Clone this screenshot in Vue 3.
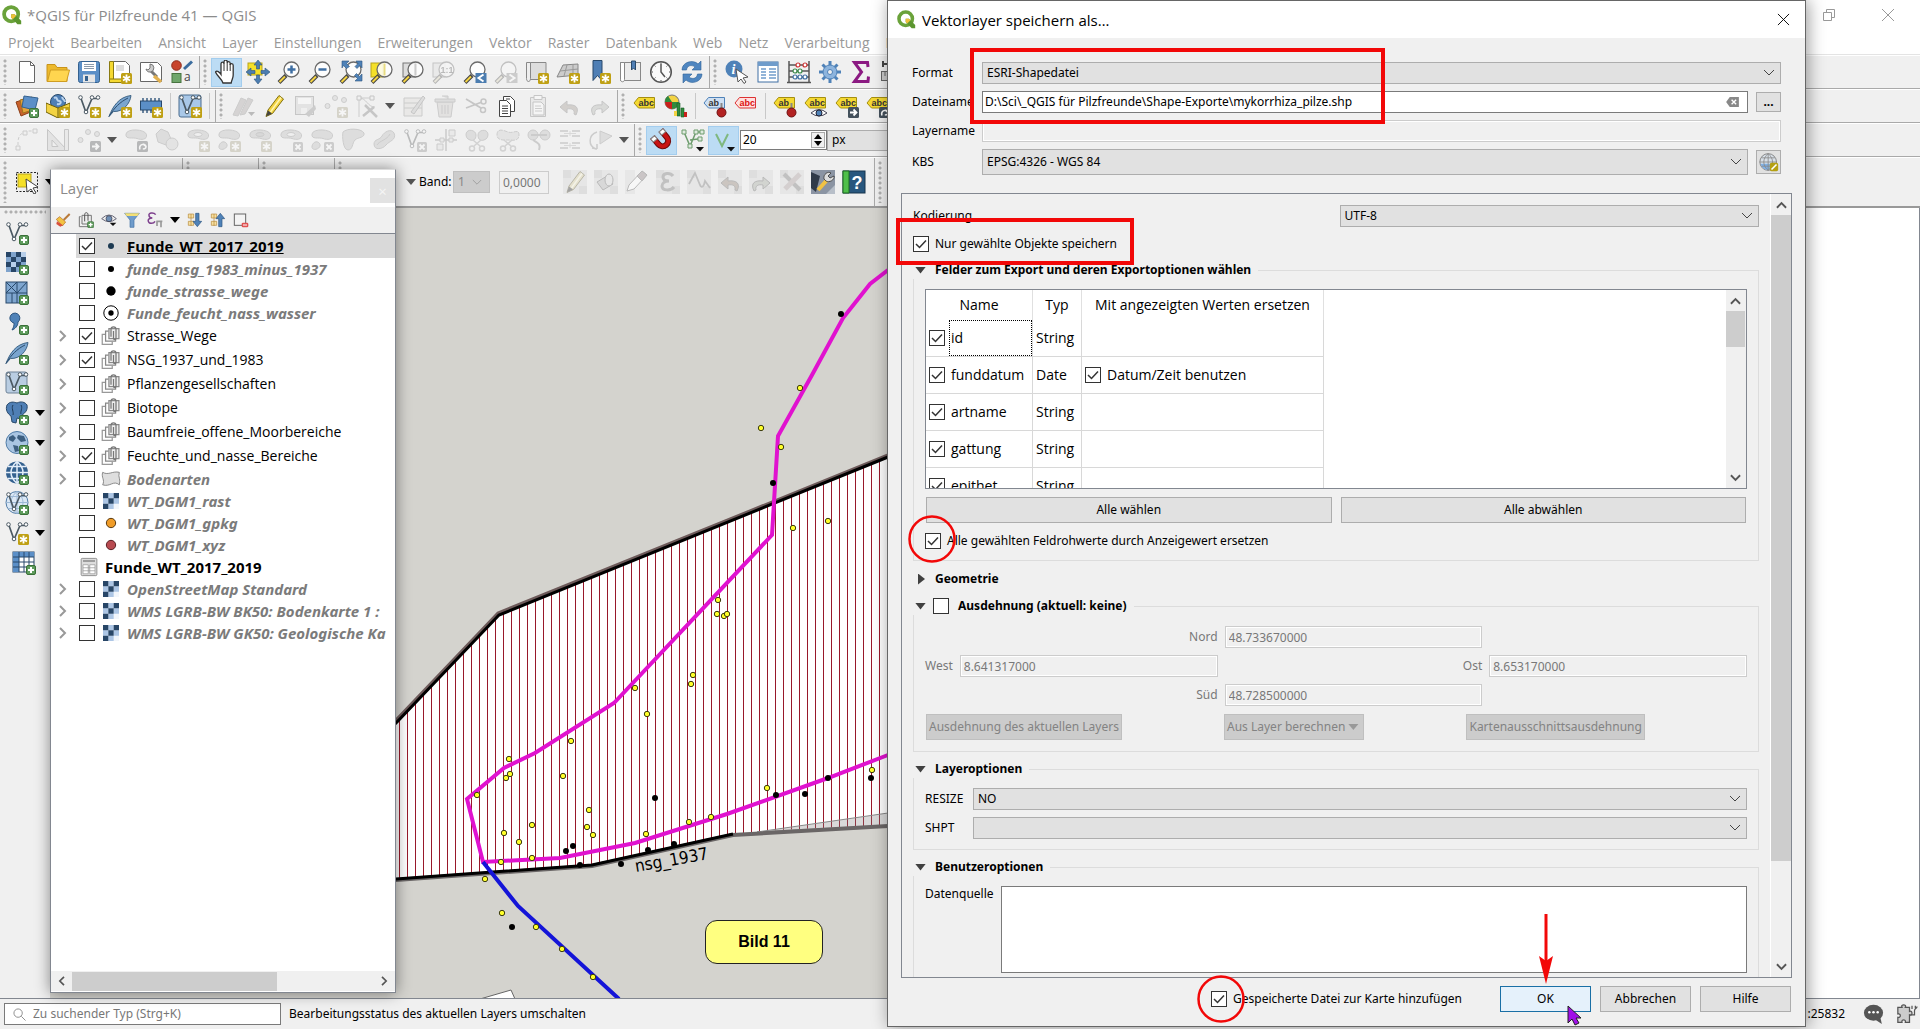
<script setup>
const menus = ['Projekt', 'Bearbeiten', 'Ansicht', 'Layer', 'Einstellungen', 'Erweiterungen', 'Vektor', 'Raster', 'Datenbank', 'Web', 'Netz', 'Verarbeitung', 'Hilfe']

// shared fragments for the 24x24 toolbar icons
const star = '<rect x="13" y="13" width="11" height="11" rx="1.500" fill="#bfa014"/><path d="M18.500 14.500v8M15 16.500l7 4M22 16.500l-7 4" stroke="#fff" stroke-width="1.800"/>'
const plus = '<rect x="14.500" y="14.500" width="9" height="9" rx="1.500" fill="#5f9c5d" stroke="#3a7038"/><path d="M19 16v6M16 19h6" stroke="#fff" stroke-width="2"/>'
const cross = '<rect x="14" y="14" width="10" height="10" rx="1.500" fill="#888"/><path d="M16.500 16.500l5 5M21.500 16.500l-5 5" stroke="#fff" stroke-width="1.800"/>'
const arrowBadge = '<rect x="13" y="13" width="11" height="11" rx="1.500" fill="#44515c"/><path d="M15 18.500h6M18.500 15.500l3 3l-3 3" stroke="#fff" stroke-width="1.800" fill="none"/>'
const rotBadge = '<rect x="13" y="13" width="11" height="11" rx="1.500" fill="#44515c"/><path d="M16 21.500c-2-5 5-7 6-3c0 2-2 3-3 2M19 16l3 2.500" stroke="#fff" stroke-width="1.600" fill="none"/>'
const lens = '<path d="M9 15.500L2 22.500" stroke="#444" stroke-width="4"/><path d="M8 16.500L2.500 22" stroke="#f3d343" stroke-width="2"/><circle cx="14.500" cy="9.500" r="7.500" fill="#fff" fill-opacity=".85" stroke="#6a6a6a" stroke-width="1.300"/>'
const vee = '<path d="M4 4.500l5 14M9 18.500L15 4.500M15 4.500h6" stroke="#4b5963" stroke-width="1.700" fill="none"/><g fill="#fff" stroke="#4b5963"><circle cx="3.500" cy="3.500" r="1.800"/><circle cx="15" cy="3.500" r="1.800"/><circle cx="21" cy="3.500" r="1.800"/><circle cx="9" cy="18" r="1.800"/></g>'
const feather = '<path d="M1 22.500C5 12 11 3 23 1.500C22 10 15 18 5.500 17.500z" fill="#7aa5cf" stroke="#3d6385"/><path d="M1 22.500C6 14 12 8 20 4" stroke="#2c4d6e" fill="none"/>'
const page = '<path d="M4.500 1.500h11l4 4v17h-15z" fill="#fff" stroke="#666"/><path d="M15.500 1.500v4h4" fill="none" stroke="#666"/>'
const blob = '<path d="M2 6C3 0 21 1 22.500 6.500C23.500 12 17 12 13 10.500C9 9 1 12 2 6z" fill="#bbb" stroke="#888"/>'
const dots = '<g fill="#ccc" stroke="#888"><circle cx="3.500" cy="12" r="2.500"/><circle cx="11" cy="4" r="2.500"/><circle cx="20" cy="6" r="2.500"/></g>'
const tag = (fill, stroke, text, col) => `<path d="M1 9L5.500 3.500H21.500V14H5.500z" fill="${fill}" stroke="${stroke}"/><text x="5.500" y="12" font-size="9" font-weight="bold" font-family="Liberation Sans, sans-serif" fill="${col}">${text}</text>`
const yTag = (t) => tag('#f5d932', '#a58f10', t, '#333')
const pin = '<path d="M18.500 9v7" stroke="#888" stroke-width="2"/><circle cx="18.500" cy="18.500" r="4.500" fill="#b22222" stroke="#701010"/>'
const scissors = '<path d="M8 12l7 6M16 12l-7 6" stroke="#999" stroke-width="1.500"/><g fill="none" stroke="#999" stroke-width="1.500"><circle cx="7" cy="20.500" r="2.500"/><circle cx="17" cy="20.500" r="2.500"/></g>'
const undo = '<path d="M19 21c4-8-1-11-9-10V7L3 13L10 19V15C15 14 18 16 17 20z" fill="#b98c68" stroke="#777"/>'
const redo = '<path d="M5 21c-4-8 1-11 9-10V7L21 13L14 19V15C9 14 6 16 7 20z" fill="#a5b59a" stroke="#777"/>'
const pencil = '<path d="M4 22.500L6 16L17 1.500L21.500 5L10.500 19.500z" fill="#f3d343" stroke="#82700c"/><path d="M8.500 18L19 3.500" stroke="#fff6b0" stroke-width="1.500"/><path d="M4 22.500l2-6 4 3z" fill="#444"/>'
const globe = '<circle cx="12" cy="11.500" r="11" fill="#a9c5e2" stroke="#4f7ba6"/>'
const grid = '<path d="M1 11.500h22M12 .5v22M3 5.500h18M3 17.500h18M12 .5c-8 7-8 15 0 22M12 .5c8 7 8 15 0 22" fill="none"'
const checker = '<rect x="1" y="1" width="20" height="20" fill="#7fa3cc"/><path d="M1 1h5v5H1zM11 1h5v5h-5zM6 6h5v5H6zM1 11h5v5H1zM11 11h5v5h-5zM6 16h5v5H6zM16 6h5v5h-5z" fill="#284667"/><path d="M6 11h5v5H6zM16 1h5v5h-5z" fill="#b8cfea"/>'
const halo = (s) => '<rect width="24" height="24" fill="#d9d9d9"/><path d="M0 0h8v8H0zM16 16h8v8h-8z" fill="#c8c8c8"/>' + s

const icons = {
  neu: page,
  open: '<path d="M1 4.500h8l2 3h10v14H1z" fill="#edb92c" stroke="#c8931a"/><path d="M4.500 10h19l-3 11.500H1.500z" fill="#ffd54f" stroke="#cf9d22"/>',
  save: '<rect x="1.500" y="1.500" width="21" height="21" rx="2" fill="#5b8fc7" stroke="#34618f"/><rect x="5" y="2" width="14" height="9" fill="#fff"/><path d="M7 4.500h10M7 6.500h10M7 8.500h10" stroke="#8a9aab"/><rect x="6" y="14.500" width="12" height="8" fill="#e6e6e6"/><rect x="8" y="16" width="3" height="5" fill="#34618f"/>',
  layout: '<path d="M5.500 1.500h12l4 4v15h-16z" fill="#fff" stroke="#666"/><path d="M1.500 1.500h4v21h-4z" fill="#f5d932" stroke="#8a7a10"/><path d="M8 5h8v6H8z" fill="#ddd"/><path d="M1.500 19h12v3.500h-12z" fill="#f5d932" stroke="#8a7a10"/>' + star,
  manage: '<path d="M1.500 2.500h17l4 4v15h-21z" fill="#fff" stroke="#666"/><path d="M10 9l8 8" stroke="#777" stroke-width="3"/><path d="M7 9a4 4 0 1 0 4-5v4l-2 2z" fill="#ccc" stroke="#777"/><path d="M15 16l7 6" stroke="#e0b050" stroke-width="3.500"/>',
  style: '<circle cx="6.500" cy="5.500" r="4.800" fill="#c8442c" stroke="#8d2b1b"/><path d="M14 9L22 1.500" stroke="#3a6c9e" stroke-width="3"/><rect x="2" y="13.500" width="9" height="9" fill="#6fa66b" stroke="#47733f"/><text x="14" y="21" font-size="12" font-family="Open Sans, sans-serif" fill="#444">a</text>',
  hand: '<path d="M8 23c-1-4-6-7-7.500-11c1.500-2 4 0 5.500 2.500V4c0-2.500 3-2.500 3 0V2c0-2.500 3.200-2.500 3.200 0v1c0-2 3-2 3 .5v1.500c0-2 3-2 3 .5V15c0 3-1.500 5-2 8z" fill="#fff" stroke="#333" stroke-width="1.300"/><path d="M9 4v7M12.200 3v8M15.200 4v7" stroke="#333"/>',
  pan: '<rect x="2" y="3" width="14" height="12" fill="#f5e028" stroke="#b8a41c"/><g fill="#4c7db0" stroke="#2c5580" stroke-width=".6"><path d="M12 0l4 5h-2.500v4h-3V5H8z"/><path d="M12 24l4-5h-2.500v-4h-3v4H8z"/><path d="M0 12l5-4v2.500h4v3H5V16z"/><path d="M24 12l-5-4v2.500h-4v3h4V16z"/></g>',
  zin: lens + '<path d="M14.500 5.500v8M10.500 9.500h8" stroke="#3f6fa3" stroke-width="2.500"/>',
  zout: lens + '<path d="M10.500 9.500h8" stroke="#3f6fa3" stroke-width="2.500"/>',
  zfull: lens + '<g fill="#4f82b8" stroke="#2c5580" stroke-width=".6"><path d="M3 1h7L7.500 3.500l3 3-3 2-3-3L3 8zM23 1h-6l2 2.500-3 3 2 2 3-3L23 8zM23 21h-7l2.500-2.500-3-3 2-2 3 3L23 14z"/></g>',
  zsel: '<rect x="1" y="3" width="12" height="14" fill="#f5e028" stroke="#b8a41c"/>' + lens + '<path d="M14.500 3.500v12" stroke="#e8dc80" stroke-width="2"/>',
  zlay: '<rect x="2" y="3" width="12" height="14" fill="#ddd" stroke="#777"/>' + lens + '<path d="M14.500 3.500v12" stroke="#ccc" stroke-width="2"/>',
  z11: '<rect x="1" y="3" width="12" height="14" fill="#ddd" stroke="#777"/>' + lens + '<text x="8.500" y="13" font-size="9" font-weight="bold" font-family="Liberation Sans, sans-serif" fill="#555">1:1</text>',
  zlast: lens + '<rect x="12.500" y="13" width="11" height="10" fill="#4c7db0"/><path d="M20.500 14.500l-5 3.500l5 3.500" stroke="#fff" stroke-width="2" fill="none"/>',
  znext: lens + '<rect x="12.500" y="13" width="11" height="10" fill="#888"/><path d="M15.500 14.500l5 3.500l-5 3.500" stroke="#fff" stroke-width="2" fill="none"/>',
  nmap: '<path d="M3 2.500h18v17H5" fill="#ddd" stroke="#888"/><path d="M1.500 2.500h4v16c0 4-4 4-4 0z" fill="#eee" stroke="#888"/>' + star,
  map3d: '<path d="M7 5l15-1v11L1 17z" fill="#ccc" stroke="#888"/><path d="M11 5l-3 11M17 4.500V15M4 11l18-2" stroke="#999" fill="none"/>' + star,
  bmark: '<path d="M6 .5h9v20l-4.500-5-4.500 5z" fill="#4f7fb5" stroke="#28496b"/>' + star,
  bmarks: '<rect x="2.500" y="2.500" width="20" height="18" fill="#ececec" stroke="#888"/><path d="M2.500 2.500h4v17c0 3-4 3-4 0z" fill="#fff" stroke="#888"/><path d="M13.500 1h4v9l-2-2-2 2z" fill="#4f7fb5" stroke="#28496b"/>',
  clock: '<circle cx="12" cy="12" r="10.300" fill="#fafafa" stroke="#555" stroke-width="1.500"/><path d="M12 4v8l4 5" stroke="#555" stroke-width="1.500" fill="none"/><path d="M12 2.500v1.500M12 20v1.500M2.500 12H4M20 12h1.500M5.500 5.500l1 1M18.500 5.500l-1 1M5.500 18.500l1-1M18.500 18.500l-1-1" stroke="#555"/>',
  refresh: '<g fill="#4f86c0" stroke="#2f6399" stroke-width=".6"><path d="M2 10C2 2 13-1 18 4l3-3v9h-9l3-3C11 4 7 6 6.500 10z"/><path d="M22 14c0 8-11 11-16 6l-3 3v-9h9l-3 3c4 3 8 1 8.500-3z"/></g>',
  ident: '<circle cx="9" cy="9" r="8.500" fill="#4f82b8"/><text x="6.500" y="14" font-size="14" font-style="italic" font-weight="bold" font-family="Liberation Serif, serif" fill="#fff">i</text><path d="M11 9l12 8-5 1 3 4-2 1.500-3-4.500-3 3z" fill="#fff" stroke="#555"/>',
  table: '<rect x="2" y="2" width="20" height="20" fill="#fff" stroke="#3f6fa3"/><rect x="2" y="2" width="20" height="4" fill="#6f9ccb"/><path d="M5 9h5M5 12h5M5 15h5M5 18h5M13 9h7M13 12h7M13 15h7M13 18h7" stroke="#6f9ccb" stroke-width="1.500"/>',
  abacus: '<path d="M2 1v22M22 1v22M2 5h20M2 11h20M2 17h20M0 22.500h24" stroke="#555" stroke-width="1.500" fill="none"/><g fill="#fff" stroke-width="1.200"><g stroke="#c33"><circle cx="11" cy="5" r="2"/><circle cx="18" cy="5" r="2"/></g><g stroke="#3a8a4a"><circle cx="8" cy="11" r="2"/><circle cx="13" cy="11" r="2"/></g><g stroke="#3f6fa3"><circle cx="8" cy="17" r="2"/><circle cx="13" cy="17" r="2"/><circle cx="18" cy="17" r="2"/></g></g>',
  gear: '<g stroke="#4f82b8" stroke-width="3"><path d="M12 1v22M1 12h22M4.500 4.500l15 15M19.500 4.500l-15 15"/></g><circle cx="12" cy="12" r="7" fill="#8db4dd" stroke="#4f82b8"/><circle cx="12" cy="12" r="2.500" fill="#f0f0f0" stroke="#4f82b8"/>',
  sigma: '<path d="M19 7l-.5-4.500H5.500L12.500 12L5.500 21.500h13.500l.5-5" fill="none" stroke="#8b1a82" stroke-width="3"/>',
  ruler: '<path d="M3 1v6M3 4h21" stroke="#444" stroke-width="2"/><rect x="1.500" y="11.500" width="22" height="9" fill="#ccc" stroke="#666"/><path d="M5 12v4M9 12v6M13 12v4M17 12v6" stroke="#666"/>',
  src: '<path d="M1 8l12-4 5 13-12 5z" fill="#c8622c" stroke="#8d3f18"/><path d="M5 6l12-3 4 12-13 4z" fill="#e3a33a" stroke="#a0701c"/><path d="M9 2l14 2-3 12-13-3z" fill="#5b8fc7" stroke="#34618f"/>' + plus,
  gpkg: '<circle cx="12" cy="8" r="7.500" fill="#4f7fb5" stroke="#28496b"/><path d="M8 4c4-2 2 3 5 3s2 4-2 3M16 3c1 3 3 3 3 5" stroke="#b9d3ee" stroke-width="2" fill="none"/><path d="M0 9l12 5 12-5v9l-12 6L0 18z" fill="#f3d343" stroke="#6d5d08"/><path d="M12 14v9.500" stroke="#6d5d08"/>' + star,
  vstar: vee + star, vplus: vee + plus,
  fstar: feather + star, fplus: feather + plus,
  chip: '<path d="M4 4v15M8 4v15M12 4v15M16 4v15M20 4v15" stroke="#3c5f83" stroke-width="1.500"/><rect x="1.500" y="7" width="21" height="9" fill="#5b8fc7" stroke="#28496b"/>' + star,
  virt: '<rect x="1" y="1" width="22" height="22" rx="2" fill="#a9c8e8" stroke="#4b6d8f"/>' + vee + star,
  virtp: '<rect x="1" y="1" width="21" height="21" rx="2" fill="#b9cde2" stroke="#6f8398"/>' + vee + plus,
  pens: '<path d="M2 21l8-17 5 2-8 16zM9 21l8-17 5 2-8 14z" fill="#b49a90" stroke="#888"/><path d="M17 18h7l-3.500 4z" fill="#555"/>',
  pencil,
  saveed: '<rect x="2.500" y="2.500" width="18" height="18" fill="#ccc" stroke="#777"/><rect x="5" y="4" width="13" height="6" fill="#fff"/><path d="M8 14h6v6H8z" fill="#eee"/><path d="M12 20l10-9 1 4-7 8z" fill="#888"/>',
  ptadd: dots + star,
  node: '<path d="M4 23V4h14M4 4c8 0 8 9 16 9" stroke="#888" fill="none"/><g fill="#eee" stroke="#777"><path d="M2 2h4v4H2zM15 2h4v4h-4z"/></g><path d="M8 22l11-9M10 11l12 12" stroke="#777" stroke-width="2.500"/>',
  form: '<path d="M2 4h18v18H2zM2 9h18M2 14h18" fill="#e8d6cc" stroke="#888"/><path d="M9 18L21 2l2 2L12 20z" fill="#bbb" stroke="#777"/>',
  trash: '<path d="M4 8h16l-2 15H6z" fill="#d8c0bb" stroke="#888"/><path d="M2 5h20v3H2zM9 2h6v3" fill="#bbb" stroke="#888"/><path d="M9 11v9M12 11v9M15 11v9" stroke="#888"/>',
  cut: '<path d="M2 5l15 9M2 14L18 8" stroke="#777" stroke-width="1.800"/><circle cx="19.500" cy="7.500" r="2.500" fill="none" stroke="#777" stroke-width="1.500"/><circle cx="19" cy="16" r="2.500" fill="none" stroke="#777" stroke-width="1.500"/>',
  copy: '<path d="M8.500 2.500h7l4 4v11h-11z" fill="#fff" stroke="#444"/><path d="M4.500 6.500h7l4 4v12h-11z" fill="#fff" stroke="#444"/><path d="M7 12h6M7 14.500h6M7 17h6M7 19.500h6M11 5h4" stroke="#444"/>',
  paste: '<path d="M4.500 3.500h15v19h-15z" fill="#ddd" stroke="#777"/><path d="M8 1.500h8v4H8zM7 8h8l3 3v10H7z" fill="#fff" stroke="#777"/><path d="M9 12h6M9 14.500h7M9 17h7" stroke="#888"/>',
  undo, redo,
  lab: yTag('abc'),
  diag: '<circle cx="8" cy="8" r="7" fill="#f3d343" stroke="#777"/><path d="M8 8L1 8a7 7 0 0 1 3-6z" fill="#2e8b3d"/><path d="M8 8h7a7 7 0 0 1-7 7z" fill="#2e8b3d"/><path d="M8 8v7a7 7 0 0 1-7-7z" fill="#c8201c"/><path d="M13 9h3v13h-3zM17 14h3v9h-3z" fill="#2e8b3d" stroke="#1a5a25" stroke-width=".6"/><path d="M20 18h3v5h-3z" fill="#c8201c"/><path d="M10 17h3v5h-3z" fill="#f3d343"/>',
  labBlue: tag('#cfe0f3', '#4f82b8', 'ab', '#333') + pin,
  labRed: tag('#ffe0e0', '#d33', 'abc', '#d11'),
  labPin: yTag('ab') + pin,
  labEye: yTag('abc') + '<path d="M7 19q8-7 16 0q-8 6-16 0z" fill="#fff" stroke="#445"/><circle cx="15" cy="19" r="3" fill="#4f82b8" stroke="#223"/>',
  labMove: yTag('abc') + arrowBadge,
  labRot: yTag('abc') + rotBadge,
  arc: '<path d="M3 22V14C3 7 8 3 14 3h8" fill="none" stroke="#888" stroke-dasharray="3 2"/><g fill="#eee" stroke="#888"><path d="M1 18h4v4H1zM8 3h4v4H8zM18 1h4v4h-4z"/></g>',
  setsq: '<path d="M1.500 1.500v21h20z" fill="#ccc" stroke="#777"/><path d="M6 12v6.500h6z" fill="#eee" stroke="#777"/><path d="M18.500 1.500h4v21h-4z" fill="#ddd" stroke="#777"/>',
  ptmove: dots + arrowBadge,
  b1: blob + rotBadge, b2: '<path d="M1 6l5-5 7 3 3 7-5 6-8-3z" fill="#bbb" stroke="#888"/><circle cx="17" cy="16" r="6" fill="#ccc" stroke="#888"/>',
  b3: blob + '<ellipse cx="12" cy="6.500" rx="4" ry="2" fill="#eee" stroke="#888"/>' + star,
  b4: blob + '<path d="M2 18c2-7 9-4 8 0s-9 5-8 0z" fill="#bbb" stroke="#888"/>' + star,
  b5: blob + '<ellipse cx="12" cy="6.500" rx="4" ry="2" fill="#aaa" stroke="#888"/>' + star,
  b6: blob + '<ellipse cx="12" cy="6.500" rx="4" ry="2" fill="#eee" stroke="#888"/>' + cross,
  b7: blob + '<path d="M2 18c2-7 9-4 8 0s-9 5-8 0z" fill="#bbb" stroke="#888"/>' + cross,
  b8: '<path d="M2 4c4-4 18-4 21 1c1 5-6 4-9 7s-2 10-7 10C2 22 1 8 2 4z" fill="#bbb" stroke="#888"/>',
  b9: '<path d="M2 16c0-5 6-4 8-8s9-8 12-3c3 7-5 8-8 12s-12 6-12-1z" fill="#bbb" stroke="#888"/><path d="M5 17c2-4 10-5 13-11" fill="none" stroke="#888"/>',
  b10: vee + cross,
  b11: '<path d="M12 1v22M1 12h22" stroke="#888" stroke-width="1.500"/><g fill="#ddd" stroke="#888"><path d="M15 2h6v6h-6zM3 16h6v6H3zM15 10h4v4h-4zM6 10h4v4H6z"/></g>',
  b12: '<path d="M1 6c1-6 10-4 10 1s-3 6-6 5S1 9 1 6zM23 6c-1-6-10-4-10 1s3 6 6 5 4-3 4-6z" fill="#bbb" stroke="#888"/>' + scissors,
  b13: '<path d="M1 7c0-7 6-5 11-3s11-4 11 3-8 5-11 5S1 13 1 7z" fill="#ccc" stroke="#888" stroke-dasharray="4 1"/>' + scissors,
  b14: '<circle cx="6" cy="7" r="5" fill="#bbb" stroke="#888"/><circle cx="18" cy="7" r="5" fill="#bbb" stroke="#888"/><path d="M6 12c5 3 8 4 6 10M4 7h16" fill="none" stroke="#888" stroke-width="2"/>',
  b15: '<path d="M2 3h8M14 3h8M2 8h8M14 8h8M2 15h8M14 15h8M2 20h8M14 20h8" stroke="#888" stroke-width="1.500"/><path d="M6 5.500h12M6 17.500h12M12 3v5M12 15v5" stroke="#aaa"/>',
  b16: '<path d="M11 3v13l12-8z" fill="#bbb" stroke="#888"/><path d="M8 4c-9 3-9 14-1 17M8 21l-5-1M8 21v-5" fill="none" stroke="#888" stroke-width="1.500"/>',
  magnet: '<g transform="rotate(-40 12 12)"><path d="M4 4v9a8 8 0 0 0 16 0V4h-5v9a3 3 0 0 1-6 0V4z" fill="#c81414" stroke="#6d0808"/><path d="M4 4h5v4H4zM15 4h5v4h-5z" fill="#fff" stroke="#888"/></g>',
  snapv: '<path d="M3 4l6 14L15 4M15 4h6M9 12l8-1" stroke="#6d9c6d" stroke-width="1.500" fill="none"/><g fill="#dfeadf" stroke="#6d9c6d"><path d="M1 2h4v4H1zM13 2h4v4h-4zM19 2h4v4h-4zM7 16h4v4H7zM17 9h4v4h-4z"/></g><path d="M15 19h8l-4 4.500z" fill="#111"/>',
  snaps: '<path d="M4 6l6 12 6-12" stroke="#7fb87f" stroke-width="2" fill="none"/><path d="M15 19h8l-4 4.500z" fill="#111"/>',
  select: '<rect x="1.500" y="2.500" width="21" height="19" fill="none" stroke="#222" stroke-dasharray="2 1.500"/><rect x="3" y="4" width="13" height="13" fill="#f5e028" stroke="#b8a41c"/><path d="M11 9l12 8-5 1 3 5-2 1-3-5-4 3z" fill="#fff" stroke="#444"/>',
  e1: halo(pencil), e2: halo('<path d="M3 12l10-6 6 8-10 6z" fill="#bbb" stroke="#777"/><ellipse cx="15" cy="10" rx="4" ry="6" fill="#ddd" stroke="#777"/>'),
  e3: '<path d="M0 0h10v24H0z" fill="#ddd"/><path d="M2 21l2-6L17 1l5 4L9 19z" fill="#fff" stroke="#777"/><path d="M12 6l5-5 5 4-5 6z" fill="#b08a90" stroke="#777"/>',
  e4: halo('<path d="M17 6c-3-4-10-3-10 1 0 3 3 4 6 4-4 0-7 2-7 5 0 5 9 5 12 1" fill="none" stroke="#888" stroke-width="3"/>'),
  e5: halo('<path d="M2 14L8 3l5 12c2 4 4 1 5-4l5 7" fill="none" stroke="#888" stroke-width="1.800"/>'),
  e6: halo(undo), e7: halo(redo),
  e8: halo('<path d="M4 4l16 16" stroke="#888" stroke-width="4"/><path d="M20 4L5 19" stroke="#c9a0a0" stroke-width="5"/>'),
  e9: '<rect width="24" height="24" fill="#8b94a3"/><path d="M0 2l9 4-4 16-5-4z" fill="#303a48"/><path d="M24 24V15l-9 9z" fill="#b8bfc9"/><path d="M7 20l9-10" stroke="#f0c244" stroke-width="4"/><path d="M13 9c-1-5 4-8 7-6l-3 3 2 2 4-2c1 4-5 7-8 5z" fill="#ddd" stroke="#333" stroke-width=".8"/>',
  e10: '<rect x="1" y="1" width="22" height="22" fill="#28577e" stroke="#16344d"/><path d="M1 1h6v22H1z" fill="#4fbf4a" stroke="#1f6d20"/><text x="9.500" y="19" font-size="18" font-weight="bold" font-family="Liberation Sans, sans-serif" fill="#fff">?</text>',
  // data source bar
  rast: checker + plus,
  mesh: '<rect x="1" y="1" width="21" height="21" fill="#7fa6cf" stroke="#28496b"/><path d="M1 12h21M12 1v21M1 1l11 11M12 12L22 1M1 12L12 1M7 12v10" stroke="#28496b" fill="none"/>' + plus,
  comma: '<path d="M5 6a5 5 0 1 1 8 5c0 4-3 7-6 8 2-3 2-5 2-7a5 5 0 0 1-4-6z" fill="#4f82b8" stroke="#2c5580"/>' + plus,
  pg: '<path d="M2 4c3-4 7-3 10-2 4-2 8-1 10 2 1 5-2 8-4 9l-2 5-4-1-1 5-4-1-1-6C3 13 0 9 2 4z" fill="#4f7fb5" stroke="#28496b"/><path d="M8 4c-2 3 1 7 0 10M16 4c2 3-1 7 0 9" fill="none" stroke="#1f3c5b"/>' + plus,
  wms1: globe + '<path d="M4 6l4-2 3 3-3 4-4-2zM13 4l6 1 2 5-5 1-4-4zM8 14l5 1 1 5-4 1z" fill="#3d5f80"/>' + plus,
  wms2: '<circle cx="12" cy="11.500" r="11" fill="#34618f"/>' + grid + ' stroke="#e3eefa" stroke-width="1.500"/>' + plus,
  wfs: '<circle cx="12" cy="11.500" r="11" fill="#dbe8f5" stroke="#4f7ba6"/>' + grid + ' stroke="#9db9d6"/>' + vee + plus,
  dbt: '<rect x="1" y="1" width="21" height="20" fill="#fff" stroke="#28496b"/><path d="M1 1h21v5H1zM1 1h6v20H1z" fill="#5b8fc7"/><path d="M1 6h21M1 11h21M1 16h21M7 1v20M12 1v20M17 1v20" stroke="#28496b"/>' + plus,
  // layer tree
  brush: '<path d="M22 3l-9 9" stroke="#b97a3a" stroke-width="3"/><path d="M2 11l5-4 9 8-5 6z" fill="#f3c343" stroke="#b06a20"/><path d="M3 14l9 6-4 2-6-4z" fill="#d8503c"/>',
  grpadd: '<path d="M4 7H2v15h13v-4" fill="none" stroke="#777" stroke-width="1.500"/><path d="M6 5h14v13H6z" fill="#eee" stroke="#777" stroke-width="1.500"/><path d="M10 14V4c0-4 5-4 5 0v9" fill="none" stroke="#555" stroke-width="1.500"/>' + plus,
  eye: '<path d="M1 10q11-11 22 0q-11 9-22 0z" fill="#eee" stroke="#667" stroke-width="1.500"/><circle cx="12" cy="10" r="4.500" fill="#6f8fb5" stroke="#334"/><path d="M13 16h10l-5 5z" fill="#111"/>',
  filt: '<path d="M1 2h22l-8 10v11H9V12z" fill="#6f9ccb" stroke="#3f6fa3"/><path d="M1 2h22l-3 4H4z" fill="#f3e077"/>',
  eps: '<path d="M13 4C10 0 2 1 3 5c0 3 3 4 5 4-4 0-7 2-6 5 1 4 8 4 10 0" fill="none" stroke="#7d3f8d" stroke-width="2.200"/><path d="M14 14h9M15 14v7M21 14v9" stroke="#999" stroke-width="2.500"/>',
  exp: '<path d="M2 3h8v6H2zM2 14h8v6H2zM6 3v18" fill="#f6dfa0" stroke="#b58a3a"/><path d="M13 2h5v12h4l-6.500 8L9 14h4z" fill="#4f82b8" stroke="#2c5580"/>',
  col: '<path d="M2 3h8v6H2zM2 14h8v6H2zM6 3v18" fill="#f6dfa0" stroke="#b58a3a"/><path d="M13 22h5V10h4l-6.500-8L9 10h4z" fill="#4f82b8" stroke="#2c5580"/>',
  rem: '<rect x="2" y="3" width="17" height="17" fill="#f4f4f4" stroke="#666" stroke-width="1.500"/><rect x="13" y="16" width="10" height="7" rx="2" fill="#e05252"/><path d="M15 19.500h6" stroke="#fff" stroke-width="1.500"/>',
  group: '<path d="M5 10H1.500v12h12v-3" fill="none" stroke="#999" stroke-width="1.500"/><path d="M9 6H5.500v12h12v-3" fill="none" stroke="#888" stroke-width="1.500"/><path d="M9.500 3h12v12h-12z" fill="#eee" stroke="#888" stroke-width="1.500"/><path d="M12 13V4c0-4 6-4 6 0v10c0 3-3 3-3 0V6" fill="none" stroke="#777" stroke-width="1.500"/>',
  poly: '<path d="M2 4c7 4 12-2 20 0c-2 6 2 8 0 15c-7-6-11 3-20 0c3-6-2-9 0-15z" fill="#dedede" stroke="#777"/>',
  rasterS: '<rect width="24" height="24" fill="#f2f6fb"/><path d="M8 0h8v8H8zM0 8h8v8H0zM16 8h8v8h-8zM8 16h8v8H8z" fill="#adc6e5"/><path d="M0 0h8v8H0zM16 0h8v8h-8zM8 8h8v8H8zM0 16h8v8H0z" fill="#284667"/>',
  tableS: '<rect x="1.500" y=".5" width="21" height="23" rx="1.500" fill="#ddd" stroke="#777"/><path d="M4 4h16" stroke="#888" stroke-width="2"/><path d="M4 9h7v12H4zM13 9h7v12h-7zM4 13h16M4 17h16" stroke="#999" fill="#fff"/>',
  dotNavy: '<circle cx="12" cy="12" r="4.500" fill="#1d3a52"/>',
  dotS: '<circle cx="12" cy="12" r="4.500" fill="#000"/>',
  dotM: '<circle cx="12" cy="12" r="7" fill="#000"/>',
  dotRing: '<circle cx="12" cy="12" r="10.800" fill="#fff" stroke="#000" stroke-width="1.500"/><circle cx="12" cy="12" r="4"/>',
  dotOrange: '<circle cx="12" cy="12" r="7" fill="#f09c28" stroke="#5a3a10" stroke-width="1.500"/>',
  dotRed: '<circle cx="12" cy="12" r="7" fill="#b84a50" stroke="#5a2024" stroke-width="1.500"/>',
  logo: '<circle cx="11" cy="11" r="8.500" fill="none" stroke="#6aa23a" stroke-width="4.500"/><path d="M11 11h4l8 8v4h-4.500L11 15z" fill="#5c962f"/><path d="M11 11h4l2 2-4 4-2-2z" fill="#efc13a"/>',
}

// a trailing '-' marks a disabled action, '+' a pressed one
const act = (s) => s.split(' ').map((t) => {
  const m = t.match(/^(.*?)([-+]?)$/)
  return { name: m[1], off: m[2] === '-', on: m[2] === '+' }
})
const bars1 = [
  act('neu open save layout manage style'),
  act('hand+ pan zin zout zfull zsel zlay z11- zlast znext- nmap map3d bmark bmarks clock refresh'),
  act('ident table abacus gear sigma ruler'),
]
const bars2 = [
  act('src gpkg vstar fstar chip | virt |'),
  act('pens- pencil saveed- ptadd- node- v form- trash- cut- copy paste- undo- redo-'),
  act('lab diag | labBlue labRed | labPin labEye labMove labRot'),
]
const bar3 = act('arc- setsq- ptmove- v b1- b2- b3- b4- b5- b6- b7- b8- b9- b10- b11- b12- b13- b14- b15- b16- v')
const bar4 = act('e1- e2- e3- e4- e5- e6- e7- e8- e9 e10')
const side = [['vplus'], ['rast'], ['mesh'], ['comma'], ['fplus'], ['virtp'], ['pg', 1], ['wms1', 1], ['wms2'], ['wfs', 1], ['vstar', 1], ['dbt']]
const treeTools = ['brush', 'grpadd', 'eye', 'filt', 'eps', 'v', 'exp', 'col', 'rem']

const layers = [
  { t: 'Funde_WT_2017_2019', i: 'dotNavy', c: true, k: 'current tall' },
  { t: 'funde_nsg_1983_minus_1937', i: 'dotS', k: 'off' },
  { t: 'funde_strasse_wege', i: 'dotM', k: 'off' },
  { t: 'Funde_feucht_nass_wasser', i: 'dotRing', k: 'off' },
  { t: 'Strasse_Wege', i: 'group', x: 1, c: true, k: 'tall' },
  { t: 'NSG_1937_und_1983', i: 'group', x: 1, c: true, k: 'tall' },
  { t: 'Pflanzengesellschaften', i: 'group', x: 1, k: 'tall' },
  { t: 'Biotope', i: 'group', x: 1, k: 'tall' },
  { t: 'Baumfreie_offene_Moorbereiche', i: 'group', x: 1, k: 'tall' },
  { t: 'Feuchte_und_nasse_Bereiche', i: 'group', x: 1, c: true, k: 'tall' },
  { t: 'Bodenarten', i: 'poly', x: 1, k: 'off' },
  { t: 'WT_DGM1_rast', i: 'rasterS', k: 'off' },
  { t: 'WT_DGM1_gpkg', i: 'dotOrange', k: 'off' },
  { t: 'WT_DGM1_xyz', i: 'dotRed', k: 'off' },
  { t: 'Funde_WT_2017_2019', i: 'tableS', k: 'bold', n: true },
  { t: 'OpenStreetMap Standard', i: 'rasterS', x: 1, k: 'off' },
  { t: 'WMS LGRB-BW BK50: Bodenkarte 1 :', i: 'rasterS', x: 1, k: 'off' },
  { t: 'WMS LGRB-BW GK50: Geologische Ka', i: 'rasterS', x: 1, k: 'off' },
]

const yellow = [[800, 388], [761, 428], [781, 447], [793, 528], [828, 521], [718, 600], [717, 614], [724, 616], [727, 614], [693, 675], [691, 684], [635, 688], [647, 714], [571, 741], [509, 759], [510, 774], [506, 778], [563, 776], [477, 795], [589, 810], [587, 827], [593, 835], [532, 825], [504, 833], [519, 842], [532, 858], [501, 862], [646, 834], [689, 822], [711, 817], [767, 788], [872, 770], [485, 879], [502, 913], [536, 927], [562, 949], [593, 977]]
const black = [[841, 314], [773, 483], [655, 798], [776, 795], [805, 794], [828, 778], [871, 778], [573, 846], [566, 851], [580, 865], [621, 864], [648, 850], [674, 844], [512, 927]]

const fields = [
  { n: 'id', t: 'String', f: true },
  { n: 'funddatum', t: 'Date', v: 'Datum/Zeit benutzen' },
  { n: 'artname', t: 'String' },
  { n: 'gattung', t: 'String' },
  { n: 'epithet', t: 'String' },
]
</script>

<template>
  <div class="app">
    <header class="titlebar">
      <svg class="logo" viewBox="0 0 24 24" v-html="icons.logo"></svg>
      <span class="wintitle">*QGIS für Pilzfreunde 41 — QGIS</span>
      <button class="winbtn" aria-label="Verkleinern"><svg viewBox="0 0 14 14"><path d="M1.500 4.500h8v8h-8zM4.500 4.500v-3h8v8h-3" /></svg></button>
      <button class="winbtn" aria-label="Schließen"><svg viewBox="0 0 14 14"><path d="M1 1l12 12M13 1L1 13" /></svg></button>
    </header>
    <nav class="menubar"><a v-for="m in menus" :key="m" href="#">{{ m }}</a></nav>

    <div v-for="(row, r) in [bars1, bars2]" :key="r" class="toolrow">
      <div v-for="(bar, b) in row" :key="b" class="bar">
        <i class="grip"></i>
        <template v-for="(a, n) in bar" :key="n">
          <i v-if="a.name === '|'" class="sep"></i>
          <i v-else-if="a.name === 'v'" class="drop"></i>
          <button v-else class="tool" :class="{ disabled: a.off, pressed: a.on }" :aria-label="a.name"><svg viewBox="0 0 24 24" v-html="icons[a.name]"></svg></button>
        </template>
      </div>
    </div>
    <div class="toolrow">
      <div class="bar">
        <i class="grip"></i>
        <template v-for="(a, n) in bar3" :key="n">
          <i v-if="a.name === 'v'" class="drop"></i>
          <button v-else class="tool disabled" :aria-label="a.name"><svg viewBox="0 0 24 24" v-html="icons[a.name]"></svg></button>
        </template>
      </div>
      <div class="bar">
        <i class="grip"></i>
        <button class="tool pressed" aria-label="Einrasten"><svg viewBox="0 0 24 24" v-html="icons.magnet"></svg></button>
        <button class="tool" aria-label="Einrastlayer"><svg viewBox="0 0 24 24" v-html="icons.snapv"></svg></button>
        <button class="tool pressed" aria-label="Einrasttyp"><svg viewBox="0 0 24 24" v-html="icons.snaps"></svg></button>
        <div class="spin"><input aria-label="Toleranz" value="20"><span class="steps"><i class="up"></i><i class="down"></i></span></div>
        <select class="unit" aria-label="Einheit"><option>px</option></select>
      </div>
    </div>
    <div class="toolrow big">
      <div class="bar selbar"><i class="grip"></i><button class="tool" aria-label="Objekte wählen"><svg viewBox="0 0 24 24" v-html="icons.select"></svg></button><i class="drop black"></i></div>
      <div class="bar stub"><i class="grip"></i></div>
      <div class="bar stub"><i class="grip"></i></div>
      <div class="bar serval">
        <i class="grip"></i>
        <i class="drop"></i>
        <label for="band">Band:</label>
        <select id="band" disabled><option>1</option></select>
        <svg class="bandchev" viewBox="0 0 12 8"><path d="M1 1l5 5 5-5" /></svg>
        <input class="val" aria-label="Wert" value="0,0000" disabled>
        <button v-for="a in bar4" :key="a.name" class="tool" :class="{ faded: a.off }" :aria-label="a.name"><svg viewBox="0 0 24 24" v-html="icons[a.name]"></svg></button>
      </div>
      <div class="bar"><i class="grip"></i></div>
    </div>

    <main class="work">
      <aside class="side">
        <i class="hgrip"></i>
        <div v-for="s in side" :key="s[0]" class="siderow">
          <button class="tool" :aria-label="s[0]"><svg viewBox="0 0 24 24" v-html="icons[s[0]]"></svg></button>
          <i v-if="s[1]" class="drop black"></i>
        </div>
      </aside>
      <section class="map">
        <svg class="canvas">
          <defs><pattern id="hatch" width="8" height="8" patternUnits="userSpaceOnUse" x="399"><rect width="8" height="8" fill="#fff" /><rect width="1" height="8" fill="#98182a" /></pattern></defs>
          <g transform="translate(-50,-208)">
            <path d="M330 790L397 722L498 615L888 457V825L778 830L733 834L592 865L330 885z" fill="url(#hatch)" />
            <path d="M757 832L888 813V826z" fill="#808080" fill-opacity=".3" stroke="#888" />
            <path d="M330 788L396 720L498 613L888 455" fill="none" stroke="#6d5a5a" stroke-width="3" />
            <path d="M330 885L396 880L592 866L733 835L888 826" fill="none" stroke="#6a6666" stroke-width="4" />
            <path d="M330 789L397 722L499 615L888 457M330 883L396 879L592 865L733 834" fill="none" stroke="#000" stroke-width="3" />
            <path d="M888 270L870 284L843 318L812 375L778 436L772 535L614 703L535 753L504 768L467 799L483 862L560 858L635 843L727 814L828 778L888 755" fill="none" stroke="#e012cf" stroke-width="4" />
            <path d="M483 862L518 906L619 999" fill="none" stroke="#1414d8" stroke-width="4" />
            <path d="M480 999L511 990L515 999z" fill="#fff" stroke="#666" />
            <circle v-for="(p, i) in black" :key="'b' + i" :cx="p[0]" :cy="p[1]" r="3" />
            <circle v-for="(p, i) in yellow" :key="'y' + i" :cx="p[0]" :cy="p[1]" r="2.700" fill="#ffff28" stroke="#3a3a10" />
            <text transform="translate(636,872) rotate(-10)" class="maplabel">nsg_1937</text>
          </g>
        </svg>
        <div class="caption">Bild 11</div>
      </section>
    </main>

    <footer class="status">
      <div class="locator"><svg viewBox="0 0 14 14"><circle cx="5.500" cy="5.500" r="4.500" /><path d="M9 9l4.500 4.500" /></svg><input aria-label="Suche" placeholder="Zu suchender Typ (Strg+K)"></div>
      <span>Bearbeitungsstatus des aktuellen Layers umschalten</span>
      <span class="crs">:25832</span>
      <svg class="bubble" viewBox="0 0 24 24"><ellipse cx="12" cy="10.500" rx="11.500" ry="9.500" fill="#555" /><path d="M13 18l9 6-2-9z" fill="#555" /><g fill="#fff"><circle cx="7" cy="10" r="1.500" /><circle cx="12" cy="10" r="1.500" /><circle cx="17" cy="10" r="1.500" /></g></svg>
      <svg class="puzzle" viewBox="0 0 24 24"><path d="M1 4h5c-2-4 6-4 4 0h5v5c4-2 4 6 0 4v9h-5c1-4-5-4-4 0H1v-6c4 1 4-5 0-4z" fill="#ccc" stroke="#555" stroke-width="1.500" /><path d="M16 13h5V8c0-3 3-2 3-5M18 2v4M22 2v3" fill="none" stroke="#555" stroke-width="1.500" /></svg>
    </footer>

    <section class="layerpanel">
      <header><span>Layer</span><button aria-label="Schließen">×</button></header>
      <div class="treetools">
        <template v-for="t in treeTools" :key="t">
          <i v-if="t === 'v'" class="drop black"></i>
          <button v-else :aria-label="t"><svg viewBox="0 0 24 24" v-html="icons[t]"></svg></button>
        </template>
      </div>
      <ul class="tree">
        <li v-for="(l, i) in layers" :key="i" :class="l.k">
          <svg class="expander" viewBox="0 0 8 12"><path v-if="l.x" d="M1 1l5 5-5 5" /></svg>
          <label>
            <input v-if="!l.n" type="checkbox" class="chk" :checked="l.c">
            <svg class="licon" :class="{ big: l.i === 'group' || l.i === 'poly' }" viewBox="0 0 24 24" v-html="icons[l.i]"></svg>
            <span>{{ l.t }}</span>
          </label>
        </li>
      </ul>
      <div class="hscroll">
        <svg viewBox="0 0 8 12"><path d="M7 1L2 6l5 5" /></svg><i></i><svg viewBox="0 0 8 12"><path d="M1 1l5 5-5 5" /></svg>
      </div>
    </section>

    <section class="dialog" role="dialog" aria-labelledby="dlgtitle">
      <header class="dlghead">
        <svg class="logo" viewBox="0 0 24 24" v-html="icons.logo"></svg>
        <h1 id="dlgtitle">Vektorlayer speichern als…</h1>
        <button aria-label="Schließen"><svg viewBox="0 0 14 14"><path d="M1 1l12 12M13 1L1 13" /></svg></button>
      </header>
      <form class="dlgbody" @submit.prevent>
        <div class="top">
          <label for="fmt">Format</label>
          <div class="combo wide"><select id="fmt"><option>ESRI-Shapedatei</option></select><svg viewBox="0 0 12 8"><path d="M1 1l5 5 5-5" /></svg></div>
          <label for="file">Dateiname</label>
          <div class="filebox"><input id="file" value="D:\Sci\_QGIS für Pilzfreunde\Shape-Exporte\mykorrhiza_pilze.shp"><svg viewBox="0 0 14 11"><path d="M4 0h10v11H4L0 5.500z" fill="#888" /><path d="M6 3l5 5M11 3l-5 5" stroke="#fff" stroke-width="1.500" /></svg></div>
          <button class="btn dots">...</button>
          <label for="lname">Layername</label>
          <input id="lname" class="edit wide" disabled>
          <label for="crs">KBS</label>
          <div class="combo high"><select id="crs"><option>EPSG:4326 - WGS 84</option></select><svg viewBox="0 0 12 8"><path d="M1 1l5 5 5-5" /></svg></div>
          <button class="btn crsbtn" aria-label="KBS wählen"><svg viewBox="0 0 24 24"><circle cx="11" cy="12" r="10" fill="#d8e0e8" stroke="#777" /><path d="M2 14h18c-2 10-16 10-18 0z" fill="#7fb2e8" /><path d="M1 12h20M3 7h16M3 17h16M11 2v20M11 2c-7 6-7 14 0 20M11 2c7 6 7 14 0 20" fill="none" stroke="#888" /><rect x="13" y="13" width="10" height="10" rx="2" fill="#b5a012" /><path d="M15 21l6-6" stroke="#fff" stroke-width="2" /></svg></button>
        </div>

        <div class="scroller">
          <div class="content">
            <div class="enc"><label for="enc">Kodierung</label><div class="combo"><select id="enc"><option>UTF-8</option></select><svg viewBox="0 0 12 8"><path d="M1 1l5 5 5-5" /></svg></div></div>
            <label class="check only"><input type="checkbox" class="chk" checked>Nur gewählte Objekte speichern</label>

            <fieldset>
              <legend><i class="tri"></i>Felder zum Export und deren Exportoptionen wählen</legend>
              <div class="fieldbox">
                <div class="clip">
                  <table>
                    <thead><tr><th class="c1">Name</th><th class="c2">Typ</th><th class="c3">Mit angezeigten Werten ersetzen</th></tr></thead>
                    <tbody>
                      <tr v-for="f in fields" :key="f.n">
                        <td><label><input type="checkbox" class="chk" checked><span :class="{ focus: f.f }">{{ f.n }}</span></label></td>
                        <td>{{ f.t }}</td>
                        <td><label v-if="f.v"><input type="checkbox" class="chk" checked><span>{{ f.v }}</span></label></td>
                      </tr>
                    </tbody>
                  </table>
                </div>
                <div class="vscroll"><svg viewBox="0 0 12 8"><path d="M1 7l5-5 5 5" /></svg><i class="thumb short"></i><svg viewBox="0 0 12 8"><path d="M1 1l5 5 5-5" /></svg></div>
              </div>
              <div class="pair"><button class="btn">Alle wählen</button><button class="btn">Alle abwählen</button></div>
              <label class="check"><input type="checkbox" class="chk" checked>Alle gewählten Feldrohwerte durch Anzeigewert ersetzen</label>
            </fieldset>

            <div class="closed"><i class="tri right"></i>Geometrie</div>

            <fieldset class="extent">
              <legend><i class="tri"></i><label><input type="checkbox" class="chk">Ausdehnung (aktuell: keine)</label></legend>
              <div class="coords">
                <label for="n" class="r nord">Nord</label><input id="n" class="edit" value="48.733670000" disabled>
                <label for="w" class="west">West</label><input id="w" class="edit" value="8.641317000" disabled>
                <label for="o" class="r">Ost</label><input id="o" class="edit" value="8.653170000" disabled>
                <label for="s" class="r nord">Süd</label><input id="s" class="edit" value="48.728500000" disabled>
              </div>
              <div class="extbtns">
                <button class="btn" disabled>Ausdehnung des aktuellen Layers</button>
                <button class="btn" disabled>Aus Layer berechnen<i class="drop"></i></button>
                <button class="btn" disabled>Kartenausschnittsausdehnung</button>
              </div>
            </fieldset>

            <fieldset class="options">
              <legend><i class="tri"></i>Layeroptionen</legend>
              <div class="opts">
                <label for="rs">RESIZE</label><div class="combo"><select id="rs"><option>NO</option></select><svg viewBox="0 0 12 8"><path d="M1 1l5 5 5-5" /></svg></div>
                <label for="sh">SHPT</label><div class="combo"><select id="sh"><option></option></select><svg viewBox="0 0 12 8"><path d="M1 1l5 5 5-5" /></svg></div>
              </div>
            </fieldset>

            <fieldset class="last">
              <legend><i class="tri"></i>Benutzeroptionen</legend>
              <div class="user"><label for="ds">Datenquelle</label><textarea id="ds"></textarea></div>
            </fieldset>
          </div>
          <div class="vscroll main"><svg viewBox="0 0 12 8"><path d="M1 7l5-5 5 5" /></svg><i class="thumb long"></i><svg viewBox="0 0 12 8"><path d="M1 1l5 5 5-5" /></svg></div>
        </div>

        <div class="dlgfoot">
          <label class="check"><input type="checkbox" class="chk" checked>Gespeicherte Datei zur Karte hinzufügen</label>
          <button class="btn ok">OK</button><button class="btn">Abbrechen</button><button class="btn">Hilfe</button>
        </div>
      </form>
    </section>

    <svg class="marks">
      <g fill="none" stroke="#f20808">
        <rect x="972" y="50" width="411" height="72" stroke-width="4" />
        <rect x="898" y="220" width="234" height="43" stroke-width="4" />
        <circle cx="932" cy="539" r="22.500" stroke-width="2.500" />
        <circle cx="1221" cy="999" r="22.500" stroke-width="2.500" />
        <path d="M1546 914v50" stroke-width="3" />
      </g>
      <path d="M1546 984L1539 956L1546 961L1553 956z" fill="#f20808" />
      <path d="M1568 1006v17l4-4 3 6 4-2-3-5h5z" fill="#a010e8" stroke="#222" />
    </svg>
  </div>
</template>

<style>
body { margin: 0; overflow: hidden; }
</style>

<style scoped>
.app {
  --segoe: "Open Sans", "Noto Sans", sans-serif;
  --tahoma: "Noto Sans", "DejaVu Sans Condensed", sans-serif;
  position: relative; display: flex; flex-direction: column; height: 100vh; overflow: hidden;
  background: #f0f0f0; color: #000; font: 12px/16px var(--tahoma);
}
* { box-sizing: border-box; }
svg { display: block; flex: none; }
button, input, select, textarea { font: inherit; color: inherit; margin: 0; padding: 0; border: 0; background: none; border-radius: 0; }
select, .chk { appearance: none; }
select:disabled { opacity: 1; }
i { display: block; flex: none; }

.titlebar { display: flex; align-items: center; height: 30px; background: #fff; padding: 0 3px 0 2px; font: 15px/20px var(--segoe); color: #8c8c8c; }
.logo { width: 20px; height: 20px; }
.wintitle { flex: 1; padding-left: 5px; }
.winbtn { width: 59px; height: 28px; display: flex; justify-content: center; align-items: center; }
.winbtn svg, .dlghead button svg { width: 14px; height: 14px; fill: none; stroke: #999; }
.menubar { display: flex; gap: 16px; height: 25px; padding-left: 8px; background: #fff; border-bottom: 1px solid #e4e4e4; }
.menubar a { color: #999; text-decoration: none; font: 14px/26px var(--segoe); }

.toolrow { display: flex; height: 34px; border-bottom: 1px solid #a9a9a9; border-top: 1px solid #fff; background: #f0f0f0; }
.bar { display: flex; align-items: center; padding-right: 2px; border-right: 1px solid #a9a9a9; }
.bar:last-child { border-right: 0; }
.grip { width: 11px; align-self: stretch; margin: 3px 0; background: radial-gradient(circle at 5px 2px, #b0b0b0 1px, transparent 2px) 0 0 / 11px 5px; }
.tool { width: 31px; height: 29px; display: flex; align-items: center; justify-content: center; flex: none; }
.tool svg { width: 24px; height: 24px; }
.tool.pressed { background: #bcdcf4; box-shadow: inset 0 0 0 1px #a3cdee; }
.disabled svg { filter: grayscale(.8) opacity(.35); }
.faded svg { filter: grayscale(.7) opacity(.45); }
.sep { width: 1px; height: 26px; margin: 0 3px 0 4px; background: #c8c8c8; }
.drop { width: 16px; height: 6px; background: #555; clip-path: polygon(3px 0, 13px 0, 8px 6px); }
.drop.black { background: #000; }
.spin { display: flex; width: 87px; height: 20px; background: #fff; border: 1px solid #7a7a7a; margin-left: 1px; }
.spin input { flex: 1; min-width: 0; padding-left: 2px; }
.steps { display: flex; flex-direction: column; justify-content: space-around; align-items: center; width: 14px; margin: 1px; background: #f0f0f0; border: 1px solid #aaa; }
.steps i { width: 8px; height: 5px; background: #000; }
.up { clip-path: polygon(0 100%, 50% 0, 100% 100%); }
.down { clip-path: polygon(0 0, 100% 0, 50% 100%); }
.unit { width: 120px; height: 21px; border: 1px solid #adadad; background: #e1e1e1; padding-left: 4px; }
.toolrow.big { height: 51px; border-bottom: 2px solid #999; }
.stub { width: 76px; }
.selbar { width: 183px; }
.serval { width: 540px; }
.serval .drop { margin-left: 57px; }
.serval label { width: 34px; }
.serval select { width: 37px; height: 22px; background: #ccc; border: 1px solid #bfbfbf; padding-left: 4px; color: #888; }
.bandchev { width: 10px; height: 7px; margin: 0 8px 0 -18px; fill: none; stroke: #999; }
.serval .val { width: 50px; height: 23px; border: 1px solid #ccc; padding-left: 3px; color: #777; margin: 0 10px 0 9px; }

.work { flex: 1; display: flex; min-height: 0; border-bottom: 1px solid #828790; }
.side { width: 50px; padding-top: 2px; }
.hgrip { height: 4px; margin: 0 4px 4px; background: radial-gradient(circle at 2px 2px, #b0b0b0 1px, transparent 2px) 0 0 / 5px 4px; }
.siderow { display: flex; align-items: center; height: 30px; }
.siderow .tool { width: 31px; margin-left: 1px; }
.siderow:last-child .tool { margin-left: 8px; }
.map { position: relative; flex: 1; background: linear-gradient(90deg, #d4d3ce 1000px, #fff 1000px); border-right: 1px solid #828790; }
.canvas { position: absolute; inset: 0; width: 100%; height: 100%; }
.maplabel { font: 17px "DejaVu Sans Condensed", "DejaVu Sans", sans-serif; }
.caption { position: absolute; left: 655px; top: 712px; width: 118px; height: 44px; border: 1px solid #222; border-radius: 12px; background: #ffff80; font: bold 16px/42px "Liberation Sans", sans-serif; text-align: center; }

.status { display: flex; align-items: center; height: 30px; padding: 0 2px 0 4px; }
.status span { padding-left: 8px; }
.locator { display: flex; align-items: center; width: 277px; height: 22px; border: 1px solid #7a7a7a; background: #fff; padding-left: 8px; }
.locator svg { width: 13px; height: 13px; fill: none; stroke: #888; margin-right: 7px; }
.locator input { flex: 1; }
.locator input::placeholder { color: #777; }
.crs { margin-left: auto; }
.bubble { width: 21px; height: 20px; margin: 0 12px 0 18px; }
.puzzle { width: 22px; height: 20px; }

.layerpanel { position: absolute; left: 50px; top: 169px; bottom: 36px; width: 346px; display: flex; flex-direction: column; background: #fff; border: 1px solid #828790; border-top-color: #ddd; box-shadow: 0 0 14px rgba(0, 0, 0, .45); font: 14px/20px var(--segoe); }
.layerpanel header { display: flex; justify-content: space-between; height: 37px; padding: 8px 0 0 9px; font-size: 15px; color: #8a8a8a; }
.layerpanel header button { width: 25px; height: 25px; background: #e2e2e2; color: #f5f5f5; }
.treetools { display: flex; align-items: center; height: 27px; padding-left: 4px; gap: 5px; background: #f0f0f0; border-bottom: 1px solid #828790; }
.treetools button { width: 18px; height: 18px; }
.treetools svg { width: 16px; height: 16px; }
.treetools .drop { margin: 0 -1px 0 -3px; }
.tree { flex: 1; margin: 0; padding: 0; list-style: none; overflow: hidden; }
.tree li { display: flex; align-items: center; height: 22px; white-space: nowrap; }
.tree li.tall { height: 24px; }
.tree label { display: flex; align-items: center; flex: 1; height: 100%; padding-left: 3px; overflow: hidden; }
.expander { width: 8px; height: 12px; margin: 0 9px 0 8px; fill: none; stroke: #999; stroke-width: 2; }
.chk { flex: none; width: 16px; height: 16px; border: 1px solid #333; background: #fff; }
.chk:checked { background: #fff url("data:image/svg+xml,%3Csvg xmlns='http://www.w3.org/2000/svg' viewBox='0 0 14 14'%3E%3Cpath d='M2 7l3.500 3.500L12 3.500' fill='none' stroke='%23333' stroke-width='1.500'/%3E%3C/svg%3E"); }
.licon { width: 16px; height: 16px; margin: 0 8px; }
.licon.big { width: 20px; height: 20px; margin: 0 6px; }
.current label { background: #d9d9d9; }
.current span { font-weight: bold; font-size: 15px; text-decoration: underline; }
.tree .off span { font: italic bold 15px/20px "Noto Sans", sans-serif; color: #7b7b7b; }
.bold span { font-weight: bold; font-size: 15px; }
.bold .licon { width: 18px; height: 20px; margin: 0 7px 0 1px; }
.hscroll { display: flex; align-items: center; height: 20px; margin-bottom: 1px; background: #f0f0f0; }
.hscroll svg { width: 7px; height: 10px; margin: 0 7px; fill: none; stroke: #555; stroke-width: 2; }
.hscroll i { width: 205px; height: 19px; background: #cdcdcd; margin-right: auto; }

.dialog { position: absolute; left: 887px; right: 114px; top: 0; bottom: 2px; display: flex; flex-direction: column; background: #f0f0f0; border: 1px solid #666; box-shadow: 2px 0 16px rgba(0, 0, 0, .4); }
.dlghead { display: flex; align-items: center; height: 37px; background: #fff; padding: 0 15px 0 9px; }
.dlghead .logo { width: 19px; height: 19px; }
.dlghead h1 { flex: 1; margin: 0 0 0 6px; font: 15px/20px var(--segoe); }
.dlghead button svg { stroke: #000; width: 13px; height: 13px; }
.dlgbody { flex: 1; display: flex; flex-direction: column; min-height: 0; }
.top { display: grid; grid-template-columns: 62px 1fr 25px; gap: 7px 8px; padding: 24px 24px 18px; align-items: center; }
.wide { grid-column: span 2; }
.combo { position: relative; height: 22px; }
.combo.high { height: 26px; }
.combo select { width: 100%; height: 100%; background: #e1e1e1; border: 1px solid #adadad; padding-left: 4px; }
.combo svg { position: absolute; right: 6px; top: calc(50% - 4px); width: 12px; height: 8px; fill: none; stroke: #444; pointer-events: none; }
.filebox { display: flex; align-items: center; height: 22px; background: #fff; border: 1px solid #7a7a7a; }
.filebox input { flex: 1; padding-left: 2px; }
.filebox svg { width: 13px; height: 10px; margin-right: 8px; }
.edit { width: 100%; height: 22px; border: 1px solid #ccc; background: #f0f0f0; box-shadow: inset 0 0 0 1px #fff; padding-left: 3px; color: #787878; }
.btn { height: 26px; background: #e1e1e1; border: 1px solid #adadad; }
.btn.dots { height: 20px; font-weight: bold; line-height: 14px; }
.crsbtn { height: 24px; display: flex; align-items: center; justify-content: center; }
.crsbtn svg { width: 20px; height: 20px; }
.scroller { flex: 1; display: flex; min-height: 0; margin: 0 13px; border: 1px solid #828790; }
.content { flex: 1; overflow: hidden; padding: 11px 11px 0; }
.enc { display: grid; grid-template-columns: 1fr 1fr; gap: 7px; align-items: center; }
.check { display: flex; align-items: center; gap: 6px; height: 16px; white-space: nowrap; }
.only { margin: 9px 0; }
fieldset { margin: 0 0 8px; padding: 0 11px 11px; border: 1px solid #dcdcdc; min-width: 0; }
legend, .closed { display: flex; align-items: center; height: 18px; padding: 0 7px 0 2px; font-weight: bold; }
legend { margin-left: -12px; background: #f0f0f0; }
legend label { display: flex; align-items: center; gap: 9px; margin-left: -2px; }
.tri { width: 11px; height: 7px; margin-right: 9px; background: #404040; clip-path: polygon(0 0, 100% 0, 50% 100%); }
.tri.right { width: 7px; height: 11px; margin: 0 10px 0 2px; clip-path: polygon(0 0, 100% 50%, 0 100%); }
.closed { margin: 9px 0 9px; padding-left: 3px; }
.fieldbox { display: flex; height: 200px; margin-top: 10px; border: 1px solid #828790; background: #fff; }
.clip { flex: 1; overflow: hidden; }
table { width: 398px; table-layout: fixed; border-collapse: separate; border-spacing: 0; font: 14px/20px var(--segoe); }
th { height: 30px; padding: 0; font-weight: normal; border-right: 1px solid #e0e0e0; }
.c1 { width: 107px; }
.c2 { width: 49px; }
td { height: 37px; padding: 0 0 0 3px; border-right: 1px solid #d8d8d8; border-bottom: 1px solid #d8d8d8; }
td label { display: flex; align-items: center; gap: 4px; height: 36px; }
td label span { flex: 1; padding-left: 2px; }
td .focus { height: 36px; line-height: 36px; outline: 1px dotted #000; outline-offset: -1px; }
.vscroll { display: flex; flex-direction: column; align-items: center; width: 20px; background: #f0f0f0; padding-right: 1px; }
.vscroll svg { width: 11px; height: 8px; margin: 7px 0 6px; fill: none; stroke: #555; stroke-width: 2; }
.thumb { width: 100%; background: #cdcdcd; margin-bottom: auto; }
.short { height: 36px; }
.long { height: 646px; }
.main { width: 21px; border-left: 1px solid #fff; padding: 0; }
.pair { display: grid; grid-template-columns: 1fr 1fr; gap: 9px; margin: 8px 0 10px; padding: 0 1px; }
.coords { display: grid; grid-template-columns: auto 1fr 1fr 1fr; gap: 7px; margin-top: 11px; align-items: center; color: #787878; }
.r { text-align: right; }
.nord { grid-column: 2; }
.west { grid-column: 1; }
.extbtns { display: flex; margin-top: 8px; padding-left: 1px; }
.extbtns .btn { display: flex; align-items: center; margin-right: auto; padding: 0 2px; background: #ccc; border-color: #bfbfbf; color: #838383; }
.extbtns .drop { background: #999; }
.options { padding-bottom: 10px; }
.opts { display: grid; grid-template-columns: 41px 1fr; gap: 7px; margin-top: 10px; align-items: center; }
.last { margin: 0; padding-bottom: 60px; }
.user { display: flex; gap: 7px; margin-top: 10px; }
.user textarea { flex: 1; height: 87px; border: 1px solid #7a7a7a; background: #fff; resize: none; }
.dlgfoot { display: flex; justify-content: flex-end; align-items: center; gap: 9px; padding: 8px 14px 14px; }
.dlgfoot .check { margin-right: 29px; }
.dlgfoot .btn { width: 91px; }
.btn.ok { background: #e5f1fb; border-color: #1a6fa5; }
.marks { position: absolute; inset: 0; width: 100%; height: 100%; pointer-events: none; }
</style>
